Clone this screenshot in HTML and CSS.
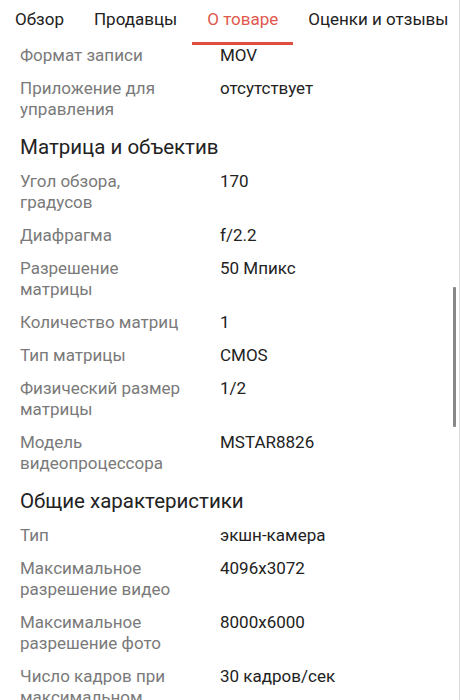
FILE: index.html
```html
<!DOCTYPE html>
<html lang="ru">
<head>
<meta charset="utf-8">
<link rel="stylesheet" href="styles.css">
</head>
<body>
<div class="page">
  <nav class="tabs">
    <div class="tab">Обзор</div>
    <div class="tab">Продавцы</div>
    <div class="tab active">О товаре</div>
    <div class="tab">Оценки и отзывы</div>
  </nav>
  <main class="content">
    <div class="row first"><div class="label">Формат записи</div><div class="value">MOV</div></div>
    <div class="row"><div class="label">Приложение для управления</div><div class="value">отсутствует</div></div>
    <h2 class="section">Матрица и объектив</h2>
    <div class="row"><div class="label">Угол обзора, градусов</div><div class="value">170</div></div>
    <div class="row"><div class="label">Диафрагма</div><div class="value">f/2.2</div></div>
    <div class="row"><div class="label">Разрешение матрицы</div><div class="value">50 Мпикс</div></div>
    <div class="row"><div class="label">Количество матриц</div><div class="value">1</div></div>
    <div class="row"><div class="label">Тип матрицы</div><div class="value">CMOS</div></div>
    <div class="row"><div class="label">Физический размер матрицы</div><div class="value">1/2</div></div>
    <div class="row"><div class="label">Модель видеопроцессора</div><div class="value">MSTAR8826</div></div>
    <h2 class="section">Общие характеристики</h2>
    <div class="row"><div class="label">Тип</div><div class="value">экшн-камера</div></div>
    <div class="row"><div class="label">Максимальное разрешение видео</div><div class="value">4096x3072</div></div>
    <div class="row"><div class="label">Максимальное разрешение фото</div><div class="value">8000x6000</div></div>
    <div class="row"><div class="label">Число кадров при максимальном разрешении</div><div class="value">30 кадров/сек</div></div>
  </main>
  <div class="scrollbar"></div>
</div>
</body>
</html>
```
FILE: styles.css
```css
html, body {
  margin: 0;
  padding: 0;
  background: #fff;
}
body {
  font-family: Roboto, "Noto Sans", sans-serif;
  color: #222;
  overflow: hidden;
}
.page {
  position: relative;
  width: 459px;
  height: 700px;
  overflow: hidden;
  border-right: 1px solid #dcdcdc;
}
.tabs {
  display: flex;
  height: 45px;
  background: #fff;
}
.tab {
  position: relative;
  padding: 8px 15px 0;
  font-size: 17px;
  line-height: 22px;
  color: #222;
  white-space: nowrap;
}
.tab.active {
  color: #e0584c;
}
.tab.active::after {
  content: "";
  position: absolute;
  left: 0;
  right: 0;
  bottom: 0;
  height: 3px;
  background: #e04e42;
}
.content {
  padding: 0 20px;
}
.row {
  display: grid;
  grid-template-columns: 200px 1fr;
  padding: 6px 0;
  font-size: 17px;
  line-height: 21px;
}
.row.first {
  padding-top: 0;
}
.label {
  color: #7a7a7a;
  padding-right: 34px;
}
.value {
  color: #222;
}
.section {
  margin: 8px 0 5px;
  font-size: 20.5px;
  line-height: 26px;
  font-weight: 400;
  color: #222;
}
.scrollbar {
  position: absolute;
  left: 453px;
  top: 287px;
  width: 3px;
  height: 140px;
  background: #888;
  border-radius: 1px;
}
```
